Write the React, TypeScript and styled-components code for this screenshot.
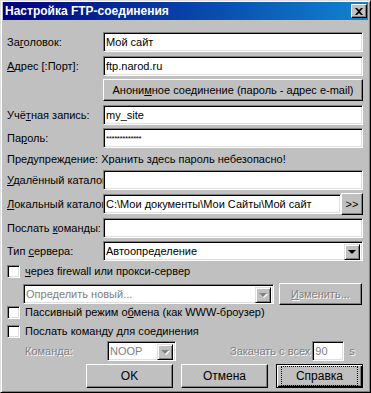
import styled, { createGlobalStyle } from "styled-components";

const GlobalStyle = createGlobalStyle`
  html, body {
    margin: 0;
    padding: 0;
    background: #c0c0c0;
  }
  body {
    font-family: "Liberation Sans", Arial, sans-serif;
    font-size: 11px;
    color: #000;
  }
`;

const Window = styled.div`
  width: 371px;
  height: 393px;
  box-sizing: border-box;
  background: #c0c0c0;
  border: 1px solid;
  border-color: #dfdfdf #000 #000 #dfdfdf;
  box-shadow: inset 1px 1px 0 #fff, inset -1px -1px 0 #808080;
  padding: 1px 2px 2px 2px;
  display: flex;
  flex-direction: column;
  overflow: hidden;
`;

const TitleBar = styled.div`
  height: 18px;
  flex-shrink: 0;
  background: linear-gradient(to right, #000080, #1084d0);
  display: flex;
  align-items: center;
  justify-content: space-between;
  padding: 0 1px 0 2px;
`;

const TitleText = styled.span`
  color: #fff;
  font-weight: bold;
  font-size: 12px;
`;

const CloseButton = styled.div`
  width: 16px;
  height: 14px;
  box-sizing: border-box;
  background: #c0c0c0;
  border: 1px solid;
  border-color: #fff #000 #000 #fff;
  box-shadow: inset -1px -1px 0 #808080;
  display: flex;
  align-items: center;
  justify-content: center;
`;

const Content = styled.div`
  display: flex;
  flex-direction: column;
  padding: 12px 5px 0 4px;
`;

const Row = styled.div<{ $mt?: number; $h?: number }>`
  display: flex;
  align-items: center;
  height: ${(p) => p.$h ?? 20}px;
  margin-top: ${(p) => p.$mt ?? 4}px;
`;

const Label = styled.div<{ $disabled?: boolean; $w?: number }>`
  width: ${(p) => p.$w ?? 96}px;
  flex-shrink: 0;
  white-space: nowrap;
  overflow: hidden;
  color: ${(p) => (p.$disabled ? "#808080" : "#000")};
  text-shadow: ${(p) => (p.$disabled ? "1px 1px 0 #fff" : "none")};
`;

const Field = styled.div<{ $disabled?: boolean; $w?: number; $ml?: number }>`
  flex: ${(p) => (p.$w ? "none" : "1")};
  width: ${(p) => (p.$w ? `${p.$w}px` : "auto")};
  margin-left: ${(p) => p.$ml ?? 0}px;
  min-width: 0;
  height: 20px;
  box-sizing: border-box;
  background: #fff;
  border: 1px solid;
  border-color: #808080 #fff #fff #808080;
  box-shadow: inset 1px 1px 0 #000, inset -1px -1px 0 #dfdfdf;
  display: flex;
  align-items: center;
  padding: 0 2px;
  white-space: nowrap;
  overflow: hidden;
  color: ${(p) => (p.$disabled ? "#808080" : "#000")};
  position: relative;
`;

const Stars = styled.span`
  font-size: 8px;
  letter-spacing: -0.4px;
`;

const Button = styled.div<{ $w?: number; $h?: number; $ml?: number; $disabled?: boolean; $default?: boolean }>`
  width: ${(p) => (p.$w ? `${p.$w}px` : "auto")};
  flex: ${(p) => (p.$w ? "none" : "1")};
  height: ${(p) => p.$h ?? 22}px;
  margin-left: ${(p) => p.$ml ?? 0}px;
  box-sizing: border-box;
  background: #c0c0c0;
  border: 1px solid;
  border-color: ${(p) => (p.$default ? "#000" : "#fff #000 #000 #fff")};
  box-shadow: ${(p) =>
    p.$default
      ? "inset 1px 1px 0 #fff, inset -1px -1px 0 #000, inset -2px -2px 0 #808080"
      : "inset -1px -1px 0 #808080"};
  display: flex;
  align-items: center;
  justify-content: center;
  white-space: nowrap;
  font-size: ${(p) => (p.$h && p.$h > 22 ? 12 : 11)}px;
  color: ${(p) => (p.$disabled ? "#808080" : "#000")};
  text-shadow: ${(p) => (p.$disabled ? "1px 1px 0 #fff" : "none")};
`;

const FocusBox = styled.span`
  border: 1px dotted #000;
  padding: 2px 14px;
`;

const DropArrow = styled.div<{ $disabled?: boolean }>`
  position: absolute;
  right: 2px;
  top: 2px;
  width: 16px;
  height: 16px;
  box-sizing: border-box;
  background: #c0c0c0;
  border: 1px solid;
  border-color: #dfdfdf #000 #000 #dfdfdf;
  box-shadow: inset 1px 1px 0 #fff, inset -1px -1px 0 #808080;
  display: flex;
  align-items: center;
  justify-content: center;
  &::after {
    content: "";
    border-left: 4px solid transparent;
    border-right: 4px solid transparent;
    border-top: 4px solid ${(p) => (p.$disabled ? "#808080" : "#000")};
    filter: ${(p) => (p.$disabled ? "drop-shadow(1px 1px 0 #fff)" : "none")};
  }
`;

const Warning = styled.div`
  height: 16px;
  margin-top: 3px;
  display: flex;
  align-items: center;
`;

const CheckRow = styled.div<{ $mt?: number; $h?: number }>`
  display: flex;
  align-items: center;
  height: ${(p) => p.$h ?? 16}px;
  margin-top: ${(p) => p.$mt ?? 0}px;
  gap: 5px;
`;

const CheckBox = styled.div`
  width: 13px;
  height: 13px;
  box-sizing: border-box;
  background: #fff;
  border: 1px solid;
  border-color: #808080 #fff #fff #808080;
  box-shadow: inset 1px 1px 0 #000, inset -1px -1px 0 #dfdfdf;
`;

const Indented = styled.div<{ $mt?: number; $pl?: number }>`
  display: flex;
  align-items: center;
  margin-top: ${(p) => p.$mt ?? 0}px;
  padding-left: ${(p) => p.$pl ?? 16}px;
  height: 20px;
`;

const GrayText = styled.span<{ $ml?: number }>`
  margin-left: ${(p) => p.$ml ?? 0}px;
  color: #808080;
  text-shadow: 1px 1px 0 #fff;
  white-space: nowrap;
`;

const ButtonRow = styled.div`
  display: flex;
  justify-content: flex-end;
  gap: 8px;
  margin-top: 3px;
`;

export default function App() {
  return (
    <>
      <GlobalStyle />
      <Window>
        <TitleBar>
          <TitleText>Настройка FTP-соединения</TitleText>
          <CloseButton>
            <svg width="8" height="7" viewBox="0 0 8 7">
              <path d="M0 0h2l2 2 2-2h2L5 3.5 8 7H6L4 5 2 7H0l3-3.5z" fill="#000" />
            </svg>
          </CloseButton>
        </TitleBar>
        <Content>
          <Row $mt={0}>
            <Label>
              За<u>г</u>оловок:
            </Label>
            <Field>Мой сайт</Field>
          </Row>
          <Row>
            <Label>
              <u>А</u>дрес [:Порт]:
            </Label>
            <Field>ftp.narod.ru</Field>
          </Row>
          <Row $mt={3} $h={22}>
            <Label />
            <Button>
              Анони<u>м</u>ное соединение (пароль - адрес e-mail)
            </Button>
          </Row>
          <Row>
            <Label>
              Учё<u>т</u>ная запись:
            </Label>
            <Field>my_site</Field>
          </Row>
          <Row $mt={3}>
            <Label>
              Па<u>р</u>оль:
            </Label>
            <Field>
              <Stars>*************</Stars>
            </Field>
          </Row>
          <Warning>Предупреждение: Хранить здесь пароль небезопасно!</Warning>
          <Row $mt={3}>
            <Label>
              <u>У</u>далённый каталог:
            </Label>
            <Field />
          </Row>
          <Row>
            <Label>
              <u>Л</u>окальный каталог:
            </Label>
            <Field>C:\Мои документы\Мои Сайты\Мой сайт</Field>
            <Button $w={22} $h={22}>
              &gt;&gt;
            </Button>
          </Row>
          <Row>
            <Label>
              Послать <u>к</u>оманды:
            </Label>
            <Field />
          </Row>
          <Row $mt={3}>
            <Label>
              Тип <u>с</u>ервера:
            </Label>
            <Field>
              Автоопределение
              <DropArrow />
            </Field>
          </Row>
          <CheckRow $mt={1} $h={18}>
            <CheckBox />
            <span>
              <u>ч</u>ерез firewall или прокси-сервер
            </span>
          </CheckRow>
          <Indented $mt={4}>
            <Field $disabled $w={251}>
              Определить новый...
              <DropArrow $disabled />
            </Field>
            <Button $w={83} $ml={5} $disabled>
              <u>И</u>зменить...
            </Button>
          </Indented>
          <CheckRow>
            <CheckBox />
            <span>
              Пассивный режим о<u>б</u>мена (как WWW-броузер)
            </span>
          </CheckRow>
          <CheckRow $mt={3}>
            <CheckBox />
            <span>Послать команду для соединения</span>
          </CheckRow>
          <Indented $mt={2} $pl={18}>
            <Label $disabled $w={82}>
              Команда:
            </Label>
            <Field $disabled $w={69}>
              NOOP
              <DropArrow $disabled />
            </Field>
            <GrayText $ml={54}>Закачать с всех</GrayText>
            <Field $disabled $w={32} $ml={2}>
              90
            </Field>
            <GrayText $ml={5}>s</GrayText>
          </Indented>
          <ButtonRow>
            <Button $w={87} $h={24}>
              OK
            </Button>
            <Button $w={87} $h={24}>
              Отмена
            </Button>
            <Button $w={87} $h={24} $default>
              <FocusBox>Справка</FocusBox>
            </Button>
          </ButtonRow>
        </Content>
      </Window>
    </>
  );
}
